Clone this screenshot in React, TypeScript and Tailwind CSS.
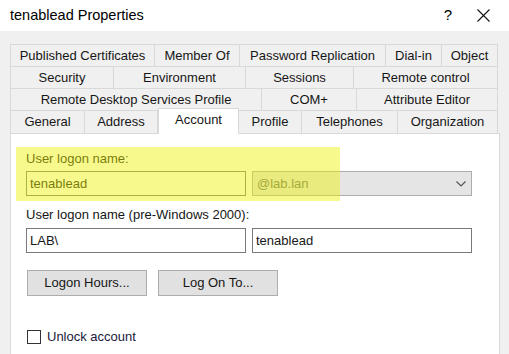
import React from 'react';

const rows: [string, number][][] = [
  [['Published Certificates', 145], ['Member Of', 85], ['Password Replication', 146], ['Dial-in', 56], ['Object', 56]],
  [['Security', 104], ['Environment', 132], ['Sessions', 108], ['Remote control', 144]],
  [['Remote Desktop Services Profile', 252], ['COM+', 95], ['Attribute Editor', 141]],
];

const lastRow: [string, number][] = [
  ['General', 75], ['Address', 73], ['Account', 81], ['Profile', 63], ['Telephones', 96], ['Organization', 100],
];

function Tab({ label, width, first }: { label: string; width: number; first: boolean }) {
  return (
    <div
      className={`h-[22px] flex items-center justify-center border-t border-r border-[#d9d9d9] shrink-0 ${first ? 'border-l' : ''}`}
      style={{ width }}
    >
      {label}
    </div>
  );
}

export default function App() {
  return (
    <div
      className="w-[509px] h-[354px] overflow-hidden bg-[#f0f0f0] text-[13px] text-[#161616]"
      style={{ fontFamily: '"Liberation Sans", Arial, sans-serif' }}
    >
      {/* Title bar */}
      <div className="h-[31px] bg-white flex items-center pl-[10px]">
        <span className="text-[14.5px] text-black">tenablead Properties</span>
        <span className="ml-auto text-[15px] text-black mr-[25px]">?</span>
        <svg width="13" height="13" viewBox="0 0 13 13" className="mr-[19px]">
          <path d="M0.5 0.5 L12.5 12.5 M12.5 0.5 L0.5 12.5" stroke="#111" strokeWidth="1.1" fill="none" />
        </svg>
      </div>

      {/* Tabs */}
      <div className="pt-[13px] pl-[10px]">
        {rows.map((row, i) => (
          <div key={i} className="flex">
            {row.map(([label, w], j) => (
              <Tab key={label} label={label} width={w} first={j === 0} />
            ))}
          </div>
        ))}
        <div className="flex items-end h-[23px]">
          {lastRow.map(([label, w], j) =>
            label === 'Account' ? (
              <div
                key={label}
                className="relative z-10 h-[26px] -mb-[1px] pb-[4px] flex items-center justify-center bg-white border-t border-l border-r border-[#d9d9d9] shrink-0"
                style={{ width: w }}
              >
                {label}
              </div>
            ) : (
              <div
                key={label}
                className={`h-[23px] flex items-center justify-center border-t border-r border-[#d9d9d9] shrink-0 ${j === 0 ? 'border-l' : ''}`}
                style={{ width: w }}
              >
                {label}
              </div>
            )
          )}
        </div>
      </div>

      {/* Panel */}
      <div className="relative ml-[10px] w-[490px] h-[240px] bg-white border border-[#d9d9d9] pl-[15px]">
        <div className="flex flex-col">
          <div className="mt-[17px] leading-[15px] h-[15px]">User logon name:</div>
          <div className="grid grid-cols-[220px_220px] gap-[6px] mt-[5px]">
            <div className="h-[25px] border border-[#7a7a7a] bg-white pl-[3px] flex items-center">tenablead</div>
            <div className="h-[25px] border border-[#adadad] bg-[#e5e5e5] pl-[4px] pr-[5px] flex items-center text-[#6d6d6d]">
              <span>@lab.lan</span>
              <svg width="10" height="6" viewBox="0 0 10 6" className="ml-auto">
                <path d="M0.5 0.5 L5 5 L9.5 0.5" stroke="#555" strokeWidth="1.2" fill="none" />
              </svg>
            </div>
          </div>

          <div className="mt-[11px] leading-[15px] h-[15px]">User logon name (pre-Windows 2000):</div>
          <div className="grid grid-cols-[220px_220px] gap-[6px] mt-[6px]">
            <div className="h-[25px] border border-[#7a7a7a] bg-white pl-[3px] flex items-center">LAB\</div>
            <div className="h-[25px] border border-[#7a7a7a] bg-white pl-[3px] flex items-center">tenablead</div>
          </div>

          <div className="flex gap-[11px] mt-[17px] ml-[1px]">
            <button type="button" className="w-[120px] h-[26px] border border-[#adadad] bg-[#e1e1e1]">Logon Hours...</button>
            <button type="button" className="w-[120px] h-[26px] border border-[#adadad] bg-[#e1e1e1]">Log On To...</button>
          </div>

          <div className="flex items-center gap-[6px] mt-[31px] ml-[1px]">
            <div className="w-[14px] h-[14px] border border-[#333] bg-white" />
            <span className="text-[#1a1a3a]">Unlock account</span>
          </div>
        </div>

        {/* highlighter mark */}
        <div className="absolute left-[5px] top-[13px] w-[324px] h-[54px] bg-[rgba(238,242,0,0.45)] pointer-events-none" />
      </div>
    </div>
  );
}
